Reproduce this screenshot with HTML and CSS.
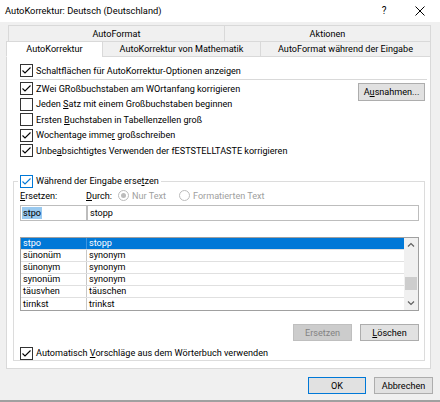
FILE: index.html
```html
<!DOCTYPE html>
<html><head><meta charset="utf-8"><link rel="stylesheet" href="styles.css"></head>
<body>
<div class="win">
  <div class="titlebar">
    <span class="title">AutoKorrektur: Deutsch (Deutschland)</span>
    <span class="help">?</span>
    <span class="close"><svg width="10" height="10" viewBox="0 0 10 10"><path d="M0.5 0.5L9.5 9.5M9.5 0.5L0.5 9.5" stroke="#000" stroke-width="1"/></svg></span>
  </div>
  <div class="tabs">
    <div class="tabrow back">
      <div class="tab t-af">AutoFormat</div>
      <div class="tab t-ak">Aktionen</div>
    </div>
    <div class="tabrow front">
      <div class="tab sel t-akr">AutoKorrektur</div>
      <div class="tab t-math">AutoKorrektur von Mathematik</div>
      <div class="tab t-afe">AutoFormat während der Eingabe</div>
    </div>
  </div>
  <div class="panel">
    <div class="row first"><span class="cb on"><svg viewBox="0 0 11 11"><path d="M1.5 5.5L4 8L9.5 2.5"/></svg></span><span class="lbl">Schaltflächen für AutoKorrektur-Optionen anzeigen</span></div>
    <div class="sep"></div>
    <div class="opts">
      <div class="optlist">
        <div class="row"><span class="cb on"><svg viewBox="0 0 11 11"><path d="M1.5 5.5L4 8L9.5 2.5"/></svg></span><span class="lbl">ZWei GRoßbuchstaben am WOrtanfang korrigieren</span></div>
        <div class="row"><span class="cb"></span><span class="lbl">Jeden <u>S</u>atz mit einem Großbuchstaben beginnen</span></div>
        <div class="row"><span class="cb"></span><span class="lbl">Ersten <u>B</u>uchstaben in Tabellenzellen groß</span></div>
        <div class="row"><span class="cb on"><svg viewBox="0 0 11 11"><path d="M1.5 5.5L4 8L9.5 2.5"/></svg></span><span class="lbl">Wochentage imme<u>r</u> großschreiben</span></div>
        <div class="row"><span class="cb on"><svg viewBox="0 0 11 11"><path d="M1.5 5.5L4 8L9.5 2.5"/></svg></span><span class="lbl">Unbe<u>a</u>bsichtigtes Verwenden der fESTSTELLTASTE korrigieren</span></div>
      </div>
      <div class="btn ausn">A<u>u</u>snahmen...</div>
    </div>
    <fieldset class="group">
      <legend class="legend"><span class="cb on focus"><svg viewBox="0 0 11 11"><path d="M1.5 5.5L4 8L9.5 2.5"/></svg></span><span class="lbl">Während der Eingabe erse<u>t</u>zen</span></legend>
      <div class="labels">
        <span class="lab-e"><u>E</u>rsetzen:</span>
        <span class="lab-d"><u>D</u>urch:</span>
        <span class="radio on"><span class="dot"></span></span><span class="dis">Nur Text</span>
        <span class="radio r2"></span><span class="dis">Formatierten Text</span>
      </div>
      <div class="inputs">
        <div class="inp i1"><span class="selected">stpo</span></div>
        <div class="inp i2">stopp</div>
      </div>
      <div class="list">
        <div class="rows">
          <div class="lrow sel"><span class="c1">stpo</span><span class="c2">stopp</span></div>
          <div class="lrow"><span class="c1">sünonüm</span><span class="c2">synonym</span></div>
          <div class="lrow"><span class="c1">sünonym</span><span class="c2">synonym</span></div>
          <div class="lrow"><span class="c1">synonüm</span><span class="c2">synonym</span></div>
          <div class="lrow"><span class="c1">täusvhen</span><span class="c2">täuschen</span></div>
          <div class="lrow"><span class="c1">tirnkst</span><span class="c2">trinkst</span></div>
        </div>
        <div class="sbar">
          <svg class="arr" width="14" height="14" viewBox="0 0 14 14"><path d="M4 8.5L7 5.5L10 8.5" fill="none" stroke="#606060" stroke-width="1.2"/></svg>
          <div class="track"><div class="thumb"></div></div>
          <svg class="arr" width="14" height="14" viewBox="0 0 14 14"><path d="M4 5.5L7 8.5L10 5.5" fill="none" stroke="#606060" stroke-width="1.2"/></svg>
        </div>
      </div>
      <div class="gbtns">
        <div class="btn disabled">Ersetzen</div>
        <div class="btn"><u>L</u>öschen</div>
      </div>
      <div class="row auto"><span class="cb on"><svg viewBox="0 0 11 11"><path d="M1.5 5.5L4 8L9.5 2.5"/></svg></span><span class="lbl">Automatisch <u>V</u>orschläge aus dem Wörterbuch verwenden</span></div>
    </fieldset>
  </div>
  <div class="footer">
    <div class="btn ok">OK</div>
    <div class="btn cancel">Abbrechen</div>
  </div>
</div>
</body></html>
```
FILE: styles.css
```css
* { box-sizing: border-box; }
html, body { margin: 0; padding: 0; }
body {
  width: 440px; height: 402px; overflow: hidden;
  background: #f0f0f0;
  font-family: Roboto, "Liberation Sans", sans-serif;
  font-size: 9.1px; line-height: 12px; color: #000;
}
.win { width: 440px; height: 402px; display: flex; flex-direction: column; border-bottom: 2px solid #a0a0a0; }
u { text-decoration: underline; text-underline-offset: 1px; }

.titlebar { height: 22px; background: #fff; display: flex; align-items: center; flex-shrink: 0; }
.title { padding-left: 5px; font-size: 9.3px; flex: 1; }
.help { width: 12px; text-align: center; font-size: 10px; margin-right: 25px; }
.close { width: 10px; height: 10px; display: flex; margin-right: 15px; }

.tabs { padding-top: 3px; }
.tabrow { display: flex; height: 16px; }
.tabrow.back { margin-left: 8px; width: 423px; }
.tabrow.front { margin-left: 6px; width: 425px; }
.tab {
  border: 1px solid #d9d9d9; background: #f0f0f0;
  display: flex; align-items: center; justify-content: center; white-space: nowrap;
}
.tab + .tab { margin-left: -1px; }
.back .tab { border-bottom: none; }
.t-af { width: 217px; }
.t-ak { width: 207px; }
.t-akr { width: 97px; }
.t-math { width: 159px; }
.t-afe { width: 171px; }
.tab.sel { background: #fff; border-bottom-color: #fff; }

.panel {
  margin-left: 6px; width: 425px; height: 312px;
  background: #fff; border: 1px solid #d9d9d9; border-top: none;
  padding: 7px 0 0 0;
}
.row { display: flex; align-items: center; height: 15.5px; padding-left: 13px; }
.row.first { height: 13px; }
.cb {
  width: 13px; height: 13px; border: 1px solid #333; background: #fff;
  display: inline-flex; flex-shrink: 0; margin-right: 3px;
}
.cb svg { width: 11px; height: 11px; fill: none; stroke: #000; stroke-width: 1.1; }
.cb.focus { border-color: #0078d7; }
.cb.focus svg { stroke: #0078d7; }
.lbl { white-space: nowrap; }
.sep { margin: 2px 0 0 13px; width: 407px; height: 1px; background: #d9d9d9; }
.opts { display: flex; margin-top: 1px; }
.optlist { flex: 1; }
.btn {
  border: 1px solid #adadad; background: #e1e1e1;
  display: flex; align-items: center; justify-content: center; white-space: nowrap;
}
.ausn { width: 67px; height: 18px; margin: 2px 5px 0 0; }

.group {
  margin: 15.5px 0 0 6px; width: 412px; height: 187px;
  border: 1px solid #dcdcdc; padding: 0 5px 0 6px; min-width: 0;
}
.legend { padding: 0 2px; margin-left: -2px; display: flex; align-items: center; height: 14px; }
.labels { display: flex; align-items: center; height: 13px; margin-top: 1px; }
.lab-e { width: 66px; }
.lab-d { width: 32px; }
.radio {
  width: 11px; height: 11px; border-radius: 50%; border: 1px solid #bcbcbc;
  display: inline-flex; align-items: center; justify-content: center; margin-right: 3px;
}
.radio .dot { width: 5px; height: 5px; border-radius: 50%; background: #bcbcbc; }
.r2 { margin-left: 13px; }
.dis { color: #a0a0a0; }
.inputs { display: flex; margin-top: 3px; height: 16px; }
.inp { border: 1px solid #bdbdbd; height: 16px; display: flex; align-items: center; padding-left: 1px; }
.i1 { width: 67px; }
.i2 { flex: 1; padding-left: 2px; }
.selected { background: #99c9ef; padding: 0 1px; line-height: 12px; }

.list { margin-top: 16px; height: 74px; border: 1px solid #a0a0a0; display: flex; }
.rows { flex: 1; }
.lrow { display: flex; height: 12px; border-bottom: 1px solid #e0e0e0; align-items: center; line-height: 11px; }
.lrow:last-child { border-bottom: none; }
.c1 { width: 66px; padding-left: 2px; border-right: 1px solid #c8c8c8; height: 100%; display: flex; align-items: center; }
.c2 { padding-left: 2px; }
.lrow.sel { background: #0078d7; color: #fff; }
.lrow.sel .c1 { border-right-color: #3d96e0; }
.sbar { width: 14px; background: #f0f0f0; display: flex; flex-direction: column; }
.arr { display: block; }
.track { flex: 1; padding-top: 25px; display: flex; justify-content: center; }
.thumb { width: 12px; height: 13px; background: #cdcdcd; }

.gbtns { display: flex; justify-content: flex-end; gap: 8px; margin-top: 13px; }
.gbtns .btn { width: 59px; height: 17px; }
.btn.disabled { background: #cccccc; border-color: #bfbfbf; color: #838383; }
.row.auto { padding-left: 0; margin-top: 4.5px; }

.footer { display: flex; justify-content: flex-end; gap: 8px; margin-top: 8px; padding-right: 7px; }
.footer .btn { height: 17px; }
.ok { width: 58px; border-color: #0078d7; }
.cancel { width: 59px; }
```
